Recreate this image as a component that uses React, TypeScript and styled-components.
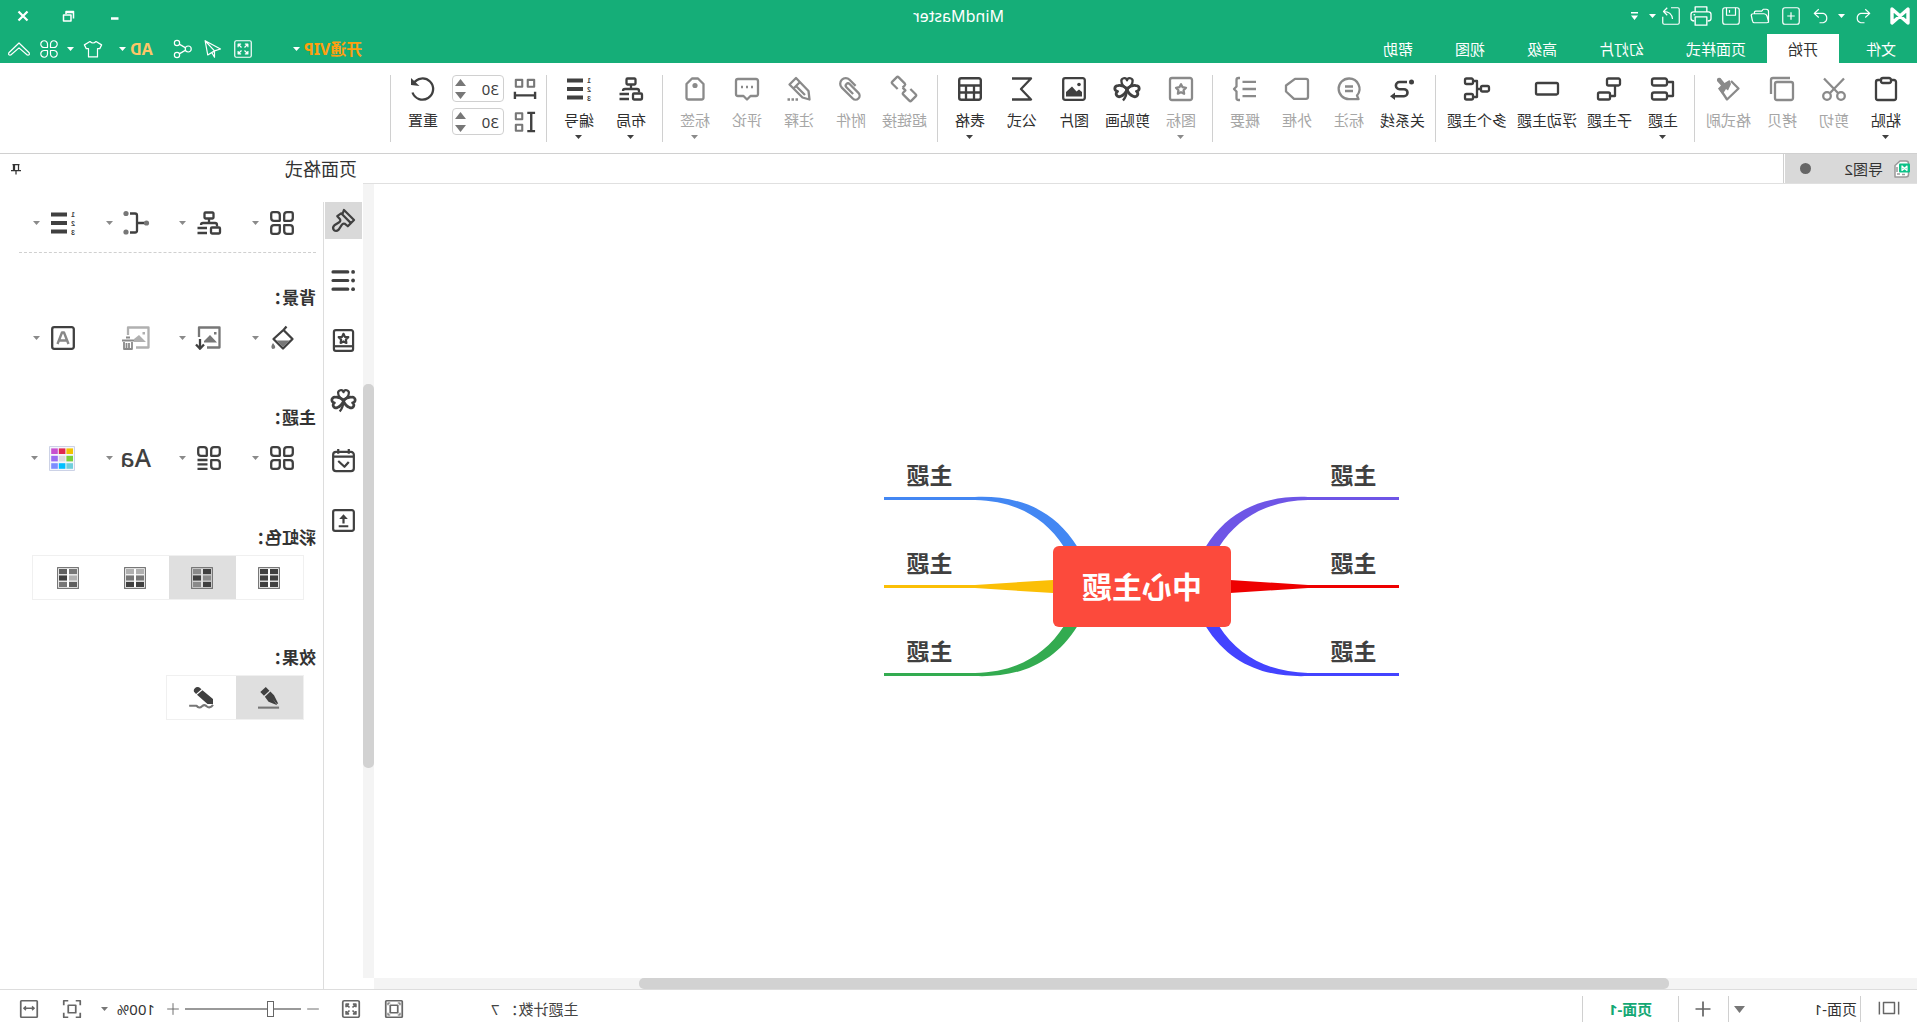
import React from "react";
import styled, { createGlobalStyle, css } from "styled-components";

const GREEN = "#15ae78";
const INK = "#404040";
const MUTED = "#8a8a8a";
const LINE = "#d0d0d0";

const GlobalStyle = createGlobalStyle`
  * { box-sizing: border-box; }
  html, body, #root { height: 100%; }
  body {
    margin: 0;
    background: #fff;
    color: #333;
    font-family: "Noto Sans", "Noto Sans CJK SC", sans-serif;
    font-size: 15px;
    line-height: 20px;
    overflow: hidden;
  }
  button, input, select { font: inherit; color: inherit; }
`;

/* The whole workspace is shown as a mirror image. */
const Window = styled.div`
  display: flex;
  flex-direction: column;
  height: 100vh;
  background: #fff;
  transform: scaleX(-1);
`;

const PlainButton = styled.button`
  display: flex;
  align-items: center;
  justify-content: center;
  flex: none;
  margin: 0;
  padding: 0;
  border: 0;
  background: none;
  white-space: nowrap;
`;

const Glyph = styled.svg<{ $thin?: boolean }>`
  display: block;
  flex: none;
  overflow: visible;
  fill: none;
  stroke: currentColor;
  stroke-width: ${(p) => (p.$thin ? 1.6 : 2.3)};
  stroke-linejoin: round;
`;

const Digit = styled.text`
  font-family: "Liberation Sans", sans-serif;
  font-size: 7px;
  font-weight: 700;
  fill: currentColor;
  stroke: none;
`;

const Letters = styled.text`
  font-family: "Noto Sans", sans-serif;
  font-size: 25px;
  font-weight: 500;
  fill: currentColor;
  stroke: none;
`;

type GlyphProps = { size?: number; thin?: boolean; children: React.ReactNode };
const Icon = ({ size = 24, thin, children }: GlyphProps) => (
  <Glyph width={size} height={size} viewBox="0 0 24 24" aria-hidden="true" $thin={thin}>
    {children}
  </Glyph>
);

const CaretSvg = styled.svg`
  display: block;
  flex: none;
  fill: currentColor;
`;
const Caret = ({ w = 7 }: { w?: number }) => (
  <CaretSvg width={w} height={Math.ceil(w / 2)} viewBox="0 0 8 4" preserveAspectRatio="none" aria-hidden="true">
    <path d="M0 0H8L4 4Z" />
  </CaretSvg>
);

const solid = { fill: "currentColor", stroke: "none" } as const;

const heart = "M12 12C8.6 9.4 7.6 7 7.6 5.2A2.3 2.3 0 0 1 12 3.8A2.3 2.3 0 0 1 16.4 5.2C16.4 7 15.4 9.4 12 12Z";
const clover = (
  <>
    <path d="M12 12C7.500 8.800 6.500 6.500 6.500 4.700A2.800 2.800 0 0 1 12 3.300A2.800 2.800 0 0 1 17.500 4.700C17.500 6.500 16.500 8.800 12 12Z" />
    <path d={heart} transform="rotate(104 12 12) translate(-3 -2.500) scale(1.250)" />
    <path d={heart} transform="rotate(-104 12 12) translate(-3 -2.500) scale(1.250)" />
    <path d="M12 12C12 17 13 20 16 23.500" />
  </>
);
const leafTL = "M1.200 3Q1.200 1.200 3 1.200H7Q9.800 1.200 9.800 4V9.800H4Q1.200 9.800 1.200 7Z";
const leafTR = "M14.200 4Q14.200 1.200 17 1.200H21Q22.800 1.200 22.800 3V7Q22.800 9.800 20 9.800H14.200Z";
const leafBL = "M4 14.200H9.800V20Q9.800 22.800 7 22.800H3Q1.200 22.800 1.200 21V17Q1.200 14.200 4 14.200Z";
const leafBR = "M14.200 14.200H20Q22.800 14.200 22.800 17V21Q22.800 22.800 21 22.800H17Q14.200 22.800 14.200 20Z";
const numbering = (
  <>
    <Digit x="0" y="6">1</Digit>
    <Digit x="0" y="15">2</Digit>
    <Digit x="0" y="24">3</Digit>
    <path d="M8 3.5H24M8 12H24M8 20.5H24" strokeWidth="3.8" />
  </>
);
const orgChart = (
  <>
    <rect x="7.5" y="1.5" width="9" height="6" rx="1" />
    <path d="M12 8V12M4 15.5V14Q4 12 6 12H18Q20 12 20 14" />
    <rect x="1" y="16.5" width="9" height="6" rx="1" />
    <path d="M14 17H23.5M14 22H23.5" />
  </>
);
const starPath = "M12 7.2L13.6 10.2L17 10.8L14.6 13.3L15.1 16.7L12 15.2L8.9 16.7L9.4 13.3L7 10.8L10.4 10.2Z";
const expandGlyph = (
  <>
    <rect x="1" y="1" width="22" height="22" rx="2" />
    <path d="M5.5 9.5V5.5H9.5M14.5 5.5H18.5V9.5M18.5 14.5V18.5H14.5M9.5 18.5H5.5V14.5M6 6L10 10M18 6L14 10M18 18L14 14M6 18L10 14" />
  </>
);

const icons: Record<string, React.ReactNode> = {
  paste: (<><rect x="2" y="3" width="20" height="20" rx="2" /><rect x="7" y="1" width="10" height="5" rx="2" fill="#fff" /></>),
  cut: (<><path d="M2 1.5L16 16M22 1.5L8 16" /><circle cx="5" cy="19" r="3.8" /><circle cx="19" cy="19" r="3.8" /></>),
  copy: (<><rect x="1" y="5" width="18" height="18" rx="2" /><path d="M4 1H21Q23 1 23 3V17" /></>),
  painter: (<><path d="M9 4L1.5 11.5L13 22.5L20.5 11" /><path {...solid} d="M10.500 3L15.500 6L19.500 1Q23.500 0 23 4L19 8.500L22 11.500L17.500 17.500L14 12L12 13.500L9 7Z" /></>),
  topic: (<><rect x="8" y="1.5" width="15" height="7" rx="2" /><rect x="8" y="15.5" width="15" height="7" rx="2" /><path d="M8 5H2V19H8" /></>),
  subtopic: (<><rect x="1" y="1.5" width="13" height="7" rx="1.5" /><rect x="11" y="15.5" width="12" height="7" rx="1.5" /><path d="M6 9V19H11" /></>),
  floating: <rect x="1" y="6" width="22" height="11.5" rx="1.5" />,
  multi: (<><rect x="0" y="9" width="8" height="5.5" rx="1.5" /><rect x="16" y="1.5" width="8" height="5.5" rx="1.5" /><rect x="16" y="17" width="8" height="5.5" rx="1.5" /><path d="M8 12H12M16 4H12V20H16" /></>),
  relation: (<><circle cx="2.5" cy="5" r="2.5" {...solid} /><path d="M7 5H14.5A3.6 3.6 0 0 1 14.5 12.2H10A3.5 3.5 0 0 0 10 19.2H19" strokeWidth="2.6" /><path {...solid} d="M19 15.5L24 19.2L19 23Z" /></>),
  callout: (<><path d="M12 1.5A10.3 10.3 0 1 1 12 22.2H2.5L4 18.5A10.3 10.3 0 0 1 12 1.5Z" /><path d="M8 9.5H16M8 14H16" /></>),
  boundary: <path d="M3 1.8H14L23 8.5V14.5L15 21.8H3Q1 21.8 1 20V3.6Q1 1.8 3 1.8Z" />,
  summary: (<><path d="M1 4.8H14.5M1 12H14.5M1 19.2H14.5" /><path d="M17 1H18.5Q20.5 1 20.5 3V9.5L23 12L20.5 14.5V21Q20.5 23 18.5 23H17" /></>),
  mark: (<><rect x="1" y="1" width="22" height="22" rx="2" /><path d={starPath} /></>),
  clipart: clover,
  picture: (<><rect x="1.2" y="1.2" width="21.6" height="21.6" rx="2" /><circle cx="7" cy="7.5" r="1.8" {...solid} /><path {...solid} d="M4 19.5V15L7 12.5L9.5 14.5L14 9.5L20 15V19.5Z" /></>),
  formula: <path d="M22 1.5H3L13 12L3 22.5H22" />,
  table: (<><rect x="1.2" y="1.2" width="21.6" height="21.6" rx="2" strokeWidth="2.4" /><path d="M1 8.5H23M1 15.5H23M8 8.5V23M16 8.5V23" /></>),
  link: (<g transform="rotate(-45 12 12)"><path d="M7.500 7.500H0Q-1.500 7.500 -1.500 9V15Q-1.500 16.500 0 16.500H8.500Q10 16.500 10 15V12H14" /><path d="M16.500 16.500H24Q25.500 16.500 25.500 15V9Q25.500 7.500 24 7.500H15.500Q14 7.500 14 9V12" /></g>),
  clip: (<g transform="rotate(45 12 12)"><path d="M6.500 13V4.500A5.500 5.500 0 0 1 17.500 4.500V20A4 4 0 0 1 9.500 20V7.500A2.200 2.200 0 0 1 14 7.500V17" /></g>),
  note: (<><path d="M15 1L21.500 7.500L8.500 20.500L1.500 22.500L2.500 14ZM11 5L17.500 11.500M15.500 8.500L6 18" /><path d="M13 22.5H23.5" strokeDasharray="2.5 1.5" /></>),
  comment: (<><path d="M3 2H21Q23 2 23 4V17Q23 19 21 19H15.5L12 22.5L8.5 19H3Q1 19 1 17V4Q1 2 3 2Z" /><path d="M6 10H8M11 10H13M16 10H18" /></>),
  tag: (<><path d="M9 1.5H15L20.5 7V20.5Q20.5 22.5 18.5 22.5H5.5Q3.5 22.5 3.5 20.5V7Z" /><circle cx="12" cy="8.5" r="2.6" {...solid} /></>),
  layout: orgChart,
  numbering,
  hspace: (<><rect x="2" y="2" width="7" height="7.5" stroke="#777" /><rect x="15" y="2" width="7" height="7.500" stroke="#777" /><path d="M1 15V23M23 15V23M1 19H23" strokeWidth="2.6" /></>),
  vspace: (<><rect x="15" y="2.5" width="7" height="6.5" stroke="#777" /><rect x="15" y="15" width="7" height="6.5" stroke="#777" /><path d="M1 2H9.5M1 22H9.5M5.2 2V22" strokeWidth="2.6" /></>),
  reset: (<><path d="M21.5 6.500A10.600 10.600 0 1 0 22.500 15.500" /><path {...solid} d="M15.500 9L24 8V1Z" /></>),
  leafGrid: (<><path d={leafTL} /><path d={leafTR} /><path d={leafBL} /><path d={leafBR} /></>),
  connector: (<><path d="M2 12H11M18 2.5H13Q11 2.5 11 4.5V19.5Q11 21.5 13 21.5H18" /><g fill="#777" stroke="none"><circle cx="1.5" cy="12" r="2.6" /><circle cx="22" cy="2.5" r="2.6" /><circle cx="22" cy="21" r="2.6" /></g></>),
  bucket: (<><path d="M9.5 3L20.5 13L11 22.5L1.5 13L10.5 4M7.5 .5L10.5 4" /><path fill="#777" stroke="none" d="M4.5 14.5H17.5L11 21ZM21 17Q24 21 21.5 23Q18 23 19 20Z" /></>),
  bgInsert: (<><path d="M14 21.5H1.5V1.5H22V11" stroke="#777" /><path fill="#777" stroke="none" d="M4 16.5L11 9L17 15V16.5ZM4.5 6H7V8.5H4.5Z" /><path d="M21 13V22.5M17 18.5L21 22.8L25 18.5" /></>),
  bgRemove: (<><path d="M12 21.5H-.5V1.5H20V9" stroke="#b0b0b0" /><path fill="#b0b0b0" stroke="none" d="M2 16L9 9L14 13V16ZM3 6H5.5V8.5H3Z" /><path d="M14 14.5H26M18 11.500H22" strokeWidth="2" /><path d="M16 16V23H24V16M19 17V22M21.500 17V22" strokeWidth="1.800" /></>),
  watermark: (<><rect x="1.2" y="1.2" width="21.6" height="21.6" rx="2" /><path d="M6.5 18L11 6.5H13L17.5 18M8 14.5H16" stroke="#888" strokeWidth="2.4" /></>),
  themeList: (<><path d={leafTL} /><path d={leafTR} /><path d={leafBL} /><path d="M13.5 14H23.5M13.5 18.400H23.5M13.5 22.8H23.5" /></>),
  fonts: <Letters x="-3" y="21">Aa</Letters>,
  brush: <path d="M11.500 1L1 11.500L7.500 18L10.500 15.500Q12.500 14.500 13.800 16.500L17 21.500Q19.500 24 22 22Q24 19.500 21.500 17L16.500 13.800Q14.500 12.500 15.800 10.500L18.500 7.500L14.500 4.500L13 5ZM14.500 4.500L4.500 14.500" />,
  outline: (<><path d="M7.5 3H23M7.5 12H23M7.5 21H23" strokeWidth="3.2" strokeLinecap="round" /><g {...solid}><circle cx="2" cy="3" r="2" /><circle cx="2" cy="12" r="2" /><circle cx="2" cy="21" r="2" /></g></>),
  stickers: (<><rect x="2" y="1.2" width="20" height="21.6" rx="2" /><path d="M2 18H22" /><path d="M12 5L13.5 8.2L17 8.5L14.5 11L15 14.5L12 13L9 14.5L9.5 11L7 8.5L10.5 8.2Z" /></>),
  task: (<><rect x="1.2" y="3" width="21.6" height="20" rx="3" /><path d="M6.5 0V5M17.5 0V5M1 8H23M6.500 13.500L11 18.500L17.500 12.500" /></>),
  upload: (<><rect x="1.2" y="1.2" width="21.6" height="21.6" rx="2" /><path d="M7 18H17M12 15V8" /><path {...solid} d="M7.5 10.5L12 5.5L16.5 10.5Z" /></>),
  pen: (<><path {...solid} d="M15.500 0L21.500 5.500L17.500 9.500L11.500 4ZM10.500 5L16.500 10.500L12.500 16L3 20L8 13L3.500 18.500L2 18L6.500 9Z" /><path d="M1 22.5H24" stroke="#777" /></>),
  scribble: (<><path {...solid} d="M13.500 1.5Q17 -1.5 20 1.5Q22 4 20 6L18.500 7.500L12.500 2.5ZM11.500 3.5L17.5 8.500L6 18.5H0V13Z" /><path d="M0 19.5Q3.5 24 7 21Q9 18.5 12 21Q15 24 18 20.5H26" stroke="#777" /></>),
  undo: <path d="M9 3L3 8.5L9 14M3 8.5H15A6.5 6.5 0 0 1 15 21H10" />,
  redo: <path d="M15 3L21 8.5L15 14M21 8.5H9A6.5 6.5 0 0 0 9 21H14" />,
  add: (<><rect x="1" y="1" width="22" height="22" rx="3" /><path d="M12 7V17M7 12H17" /></>),
  open: <path d="M2 21V6Q2 3 5 3H9L11 5.5H19Q21 5.5 21 9H8Q5 9 4 12L2 19Q2 21 4 21H21Q23 21 23.5 18L25 11Q25 9 22 9" />,
  save: (<><rect x="1" y="1" width="22" height="22" rx="3" /><path d="M6 1V11H18V1M14 4V7.5" /></>),
  print: (<><path d="M5 7V1H19V7M4 18Q0 18 0 15V10Q0 7 3 7H21Q24 7 24 10V15Q24 18 20 18" /><rect x="5" y="13" width="14" height="10" /><path d="M19 10.5H21" /></>),
  share: <path d="M12 1H3Q1 1 1 3V21Q1 23 3 23H21Q23 23 23 21V13M10 16Q11 6 22 6M17 1L22 6L17 11" />,
  full: expandGlyph,
  send: <path d="M22.5 1L2 12L10 14.5ZM22.5 1L19 20L10 14.5ZM10 14.5V23L13.5 17" />,
  nodes: (<><circle cx="5" cy="12" r="4" /><circle cx="20" cy="4" r="3.5" /><circle cx="20" cy="20" r="3.5" /><path d="M8.5 10.5L17 5.5M8.5 13.5L17 18.5" /></>),
  shirt: <path d="M8 2Q12 6 16 2L23.5 6.5L21 11.5H18V22.5H6V11.5H3L.5 6.5Z" />,
  command: <path d="M10 6A4.5 4.5 0 1 0 6 10H10ZM14 6A4.5 4.5 0 1 1 18 10H14ZM10 18A4.5 4.5 0 1 1 6 14H10ZM14 18A4.5 4.5 0 1 0 18 14H14Z" />,
  collapse: <path d="M-1.5 17L12 4L25.5 17Q27 20.5 23 20L12 10.5L1 20Q-3 20.5 -1.5 17Z" />,
  minimize: <path d="M5 17H20" strokeWidth="5" />,
  restore: (<><path d="M3 17V3H18V8M3 5H18" strokeWidth="3" /><rect x="8" y="10" width="15" height="12" strokeWidth="3" /></>),
  close: <path d="M3 3L21 21M21 3L3 21" strokeWidth="4.5" />,
  pin: (<><path d="M5 3H19M7 3V15M2 15H22M12 15V23" strokeWidth="2.5" /><path d="M16 3V15" strokeWidth="4.5" /></>),
  panes: (<><rect x="6" y="5" width="12" height="12" /><path d="M1.5 4V18M22.5 4V18" /></>),
  plus: <path d="M12 2V22M2 12H22" />,
  minus: <path d="M2 12H22" />,
  fit: (<><rect x="1" y="1" width="22" height="22" rx="1" /><rect x="7" y="7" width="10" height="10" /><path d="M4 7V4H7M17 4H20V7M20 17V20H17M7 20H4V17" strokeWidth="1.5" /></>),
  page: (<><path d="M1 7V1H7M17 1H23V7M23 17V23H17M7 23H1V17" /><rect x="7" y="7" width="10" height="10" /></>),
  fitWidth: (<><rect x="1" y="1" width="22" height="22" rx="1" /><path d="M5 11H19M8 8.5L5 11L8 13.5M16 8.5L19 11L16 13.5" strokeWidth="1.8" /></>),
};

/* ---------- header ---------- */

const Header = styled.header`
  flex: none;
  color: #fff;
  background: ${GREEN};
`;
const TitleRow = styled.div`
  display: grid;
  grid-template-columns: 1fr auto 1fr;
  align-items: center;
  height: 32px;
`;
const QuickBar = styled.div`
  display: flex;
  align-items: center;
  padding-left: 7px;
`;
const Logo = styled.svg`
  display: block;
  width: 20px;
  height: 18px;
  margin-right: 12px;
`;
const QuickButton = styled(PlainButton)`
  width: 30px;
  height: 24px;
`;
const CaretButton = styled(PlainButton)<{ $w?: number }>`
  width: ${(p) => p.$w ?? 14}px;
  height: 24px;
`;
const AppTitle = styled.h1`
  margin: 0;
  font-size: 16px;
  line-height: 20px;
  font-weight: 400;
`;
const WindowButtons = styled.div`
  display: flex;
  justify-content: flex-end;
`;
const WindowButton = styled(PlainButton)`
  width: 46px;
  height: 28px;
`;
const MenuRow = styled.div`
  display: flex;
  align-items: flex-end;
  height: 31px;
`;
const Menu = styled.nav`
  display: flex;
`;
const MenuTab = styled(PlainButton)<{ $active?: boolean; $first?: boolean }>`
  height: 29px;
  padding: 0 21px;
  margin-right: ${(p) => (p.$first ? 6 : 0)}px;
  ${(p) =>
    p.$active &&
    css`
      color: #333;
      background: #fff;
    `}
`;
const HeaderTools = styled.div`
  display: flex;
  align-items: center;
  height: 29px;
  margin-left: auto;
  padding-right: 4px;
`;
const AccentButton = styled(PlainButton)<{ $color: string }>`
  color: ${(p) => p.$color};
  font-size: 16px;
  font-weight: 700;
`;
const ToolCluster = styled.div`
  display: flex;
  align-items: center;
  margin: 0 15px 0 32px;
`;
const EndCluster = styled.div`
  display: flex;
  align-items: center;
  margin-left: 8px;
`;

/* ---------- ribbon ---------- */

const Ribbon = styled.div`
  display: flex;
  flex: none;
  height: 91px;
  padding-top: 12px;
  border-bottom: 1px solid ${LINE};
`;
const RibbonGroup = styled.div`
  display: flex;
  height: 67px;
  padding: 0 6px 0 5px;
  border-right: 1px solid ${LINE};
`;
const RibbonButton = styled(PlainButton)<{ $muted?: boolean }>`
  flex-direction: column;
  justify-content: flex-start;
  min-width: 52px;
  height: 67px;
  padding: 2px 5px 0;
  color: ${(p) => (p.$muted ? MUTED : INK)};
`;
const RibbonLabel = styled.span<{ $muted?: boolean }>`
  margin: 9px 0 5px;
  color: ${(p) => (p.$muted ? "#a6a6a6" : "#2f2f2f")};
`;
const Spacing = styled.div`
  display: flex;
  flex-direction: column;
  gap: 6px;
  padding-right: 3px;
`;
const SpacingField = styled.label`
  display: flex;
  align-items: center;
  gap: 10px;
  height: 27px;
  padding-left: 5px;
  color: ${INK};
`;
const SpinBox = styled.span`
  display: flex;
  align-items: center;
  width: 52px;
  height: 27px;
  padding: 0 2px 0 4px;
  border: 1px solid ${LINE};
  border-radius: 4px;
`;
const SpinInput = styled.input`
  flex: 1;
  min-width: 0;
  padding: 0;
  border: 0;
  outline: 0;
  background: none;
`;
const Arrows = styled.span`
  display: flex;
  flex-direction: column;
  gap: 6px;
  color: #777;
`;
const ArrowSvg = styled(CaretSvg)<{ $up?: boolean }>`
  transform: rotate(${(p) => (p.$up ? 180 : 0)}deg);
`;

/* ---------- work area ---------- */

const Main = styled.main`
  display: flex;
  flex: 1;
  min-height: 0;
`;
const Editor = styled.section`
  display: flex;
  flex: 1;
  flex-direction: column;
  min-width: 0;
`;
const DocTabs = styled.div`
  display: flex;
  flex: none;
  height: 30px;
  border-bottom: 1px solid #e0e0e0;
`;
const DocTab = styled(PlainButton)`
  width: 132px;
  height: 29px;
  padding-left: 7px;
  gap: 10px;
  justify-content: flex-start;
  background: #d9d9d9;
  color: #333;
`;
const Dot = styled.span`
  width: 11px;
  height: 11px;
  margin: 0 15px 0 auto;
  border-radius: 50%;
  background: #666;
`;
const TabEdge = styled.span`
  width: 1px;
  margin-left: 1px;
  background: ${LINE};
`;
const Stage = styled.div`
  display: flex;
  flex: 1;
  min-height: 0;
`;
const CanvasColumn = styled.div`
  display: flex;
  flex: 1;
  flex-direction: column;
  min-width: 0;
`;
const Canvas = styled.div`
  display: flex;
  flex: 1;
  align-items: center;
  justify-content: center;
  min-height: 0;
  padding: 11px 0 0 8px;
`;
const Board = styled.div`
  position: relative;
  width: 515px;
  height: 261px;
`;
const Branches = styled.svg`
  position: absolute;
  inset: 0;
  overflow: visible;
`;
const RootNode = styled.div`
  position: absolute;
  left: 168px;
  top: 90px;
  width: 178px;
  height: 81px;
  border-radius: 6px;
  background: #fc4a3c;
  color: #fff;
  font-size: 30px;
  line-height: 82px;
  font-weight: 700;
  text-align: center;
`;
const TopicNode = styled.div<{ $x: number; $y: number; $color: string }>`
  position: absolute;
  left: ${(p) => p.$x}px;
  top: ${(p) => p.$y}px;
  width: 91px;
  height: 44px;
  border-bottom: 3px solid ${(p) => p.$color};
  color: ${INK};
  font-size: 23px;
  line-height: 38px;
  font-weight: 700;
  text-align: center;
`;
const HScroll = styled.div`
  display: flex;
  flex: none;
  height: 11px;
  background: #f4f4f4;
`;
const VScroll = styled.div`
  display: flex;
  flex-direction: column;
  flex: none;
  width: 11px;
  margin-bottom: 11px;
  background: #f4f4f4;
`;
const ScrollPart = styled.div<{ $grow: number; $thumb?: boolean }>`
  flex: ${(p) => p.$grow} 1 0;
  border-radius: 5px;
  background: ${(p) => (p.$thumb ? "#d2d2d2" : "transparent")};
`;

/* ---------- side panel ---------- */

const Panel = styled.aside`
  display: flex;
  flex: none;
  flex-direction: column;
  width: 363px;
`;
const PanelHead = styled.div`
  display: flex;
  align-items: center;
  justify-content: space-between;
  height: 30px;
  padding: 0 10px 0 6px;
`;
const PanelTitle = styled.h2`
  margin: 0;
  font-size: 18px;
  line-height: 24px;
  font-weight: 400;
`;
const PanelBody = styled.div`
  display: flex;
  flex: 1;
  min-height: 0;
  margin-top: 18px;
`;
const Rail = styled.nav`
  display: flex;
  flex: none;
  flex-direction: column;
  gap: 23px;
  width: 40px;
  padding-left: 1px;
  border-right: 1px solid #ddd;
`;
const RailButton = styled(PlainButton)<{ $active?: boolean }>`
  width: 37px;
  height: 37px;
  color: ${INK};
  background: ${(p) => (p.$active ? "#d9d9d9" : "none")};
`;
const Settings = styled.div`
  flex: 1;
  min-width: 0;
  padding: 7px 19px 0 7px;
`;
const ToolRow = styled.div`
  display: flex;
  height: 28px;
  padding-left: 20px;
`;
const Tool = styled(PlainButton)<{ $muted?: boolean }>`
  justify-content: flex-start;
  width: 73px;
  height: 28px;
  padding-left: 2px;
  gap: 11px;
  color: ${(p) => (p.$muted ? MUTED : INK)};
  &:last-child {
    width: 56px;
  }
`;
const GreyCaret = styled.span`
  color: #8a8a8a;
`;
const Divider = styled.hr`
  margin: 15px 0 33px;
  border: 0;
  border-top: 1px dashed ${LINE};
`;
const Section = styled.section`
  height: 120px;
`;
const SectionTitle = styled.h3<{ $gap: number }>`
  margin: 0 0 ${(p) => p.$gap}px;
  font-size: 17px;
  line-height: 24px;
  font-weight: 700;
`;
const Segments = styled.div`
  display: inline-flex;
  height: 45px;
  margin-left: 12px;
  padding-right: 2px;
  border: 1px solid #f0f0f0;
`;
const Segment = styled(PlainButton)<{ $active?: boolean }>`
  width: 67px;
  height: 43px;
  color: ${INK};
  background: ${(p) => (p.$active ? "#dfdfdf" : "none")};
`;

const Swatches = () => {
  const colors = ["#f2c200", "#e02850", "#c750cf", "#7ad03a", "#dcdcdc", "#9b6cf0", "#70cfdc", "#00bfff", "#7c8cff"];
  return (
    <Glyph width="26" height="25" viewBox="0 0 26 25" aria-hidden="true">
      <rect x=".5" y=".5" width="25" height="24" fill="#f4f6fc" stroke="#ccd2e6" strokeWidth="1" />
      {colors.map((c, i) => (
        <rect key={c} x={2 + (i % 3) * 7.6} y={2.4 + Math.floor(i / 3) * 7.4} width="6.600" height="5.600" fill={c} stroke="none" />
      ))}
    </Glyph>
  );
};

const Rainbow = ({ shades }: { shades: string[] }) => (
  <Glyph width="22" height="22" viewBox="0 0 22 22" aria-hidden="true">
    <rect x=".6" y=".6" width="20.8" height="20.8" fill="none" stroke="#777" strokeWidth="1.2" />
    {shades.map((c, i) => (
      <rect key={i} x={i % 2 ? 12 : 2} y={2 + Math.floor(i / 2) * 6.4} width="8" height="5.2" fill={c} stroke="none" />
    ))}
  </Glyph>
);

/* ---------- status bar ---------- */

const StatusBar = styled.footer`
  display: flex;
  flex: none;
  align-items: center;
  height: 37px;
  padding: 2px 17px 0 0;
  border-top: 1px solid #ddd;
  color: #444;
`;
const StatusButton = styled(PlainButton)<{ $w?: number }>`
  width: ${(p) => p.$w ?? 24}px;
  height: 30px;
  color: #666;
`;
const Rule = styled.span`
  width: 1px;
  height: 26px;
  background: ${LINE};
`;
const PageSelect = styled.label`
  display: flex;
  align-items: center;
  width: 131px;
  padding: 0 5px 0 3px;
  color: #777;
`;
const BareSelect = styled.select`
  flex: 1;
  min-width: 0;
  padding: 0;
  border: 0;
  outline: 0;
  appearance: none;
  background: none;
  color: #333;
`;
const PageTab = styled(PlainButton)`
  width: 95px;
  height: 30px;
  color: #14a874;
  font-weight: 700;
`;
const Count = styled.span`
  display: flex;
  gap: 4px;
  margin: 0 85px 0 auto;
`;
const IconPair = styled.div`
  display: flex;
  gap: 19px;
`;
const Zoom = styled.div`
  display: flex;
  align-items: center;
  margin: 0 17px 0 14px;
`;
const ZoomLevel = styled.label`
  display: flex;
  align-items: center;
  width: 54px;
  margin-left: 6px;
  color: #777;
`;
const Slider = styled.input`
  width: 116px;
  height: 16px;
  margin: 0;
  appearance: none;
  background: linear-gradient(#999, #999) center / 100% 2px no-repeat;
  &::-webkit-slider-thumb {
    appearance: none;
    width: 7px;
    height: 16px;
    border: 1px solid #666;
    background: #fff;
  }
`;

/* ---------- data ---------- */

type Action = { label: string; icon: string; muted?: boolean; menu?: boolean };
const groups: Action[][] = [
  [
    { label: "粘贴", icon: "paste", menu: true },
    { label: "剪切", icon: "cut", muted: true },
    { label: "拷贝", icon: "copy", muted: true },
    { label: "格式刷", icon: "painter", muted: true },
  ],
  [
    { label: "主题", icon: "topic", menu: true },
    { label: "子主题", icon: "subtopic" },
    { label: "浮动主题", icon: "floating" },
    { label: "多个主题", icon: "multi" },
  ],
  [
    { label: "关系线", icon: "relation" },
    { label: "标注", icon: "callout", muted: true },
    { label: "外框", icon: "boundary", muted: true },
    { label: "概要", icon: "summary", muted: true },
  ],
  [
    { label: "图标", icon: "mark", muted: true, menu: true },
    { label: "剪贴画", icon: "clipart" },
    { label: "图片", icon: "picture" },
    { label: "公式", icon: "formula" },
    { label: "表格", icon: "table", menu: true },
  ],
  [
    { label: "超链接", icon: "link", muted: true },
    { label: "附件", icon: "clip", muted: true },
    { label: "注释", icon: "note", muted: true },
    { label: "评论", icon: "comment", muted: true },
    { label: "标签", icon: "tag", muted: true, menu: true },
  ],
  [
    { label: "布局", icon: "layout", menu: true },
    { label: "编号", icon: "numbering", menu: true },
  ],
];

const topics = [
  { x: 0, y: 0, color: "#6e55e6" },
  { x: 0, y: 88, color: "#ee0000" },
  { x: 0, y: 176, color: "#4343ff" },
  { x: 424, y: 0, color: "#4387f3" },
  { x: 424, y: 88, color: "#fbbf06" },
  { x: 424, y: 176, color: "#33ab50" },
];

const curve = "M91 41C130 39.5 168 50 193.500 91H180C160 60 130 45 91 44Z";
const wedge = "M91 129L169 124V137L91 132Z";

const RibbonAction = ({ a }: { a: Action }) => (
  <RibbonButton type="button" $muted={a.muted}>
    <Icon>{icons[a.icon]}</Icon>
    <RibbonLabel $muted={a.muted}>{a.label}</RibbonLabel>
    {a.menu && <Caret />}
  </RibbonButton>
);

const Quick = ({ icon, label, size = 18 }: { icon: string; label: string; size?: number }) => (
  <QuickButton type="button" aria-label={label}>
    <Icon size={size} thin>{icons[icon]}</Icon>
  </QuickButton>
);

const PanelTool = ({ icon, label, muted, menu = true }: { icon: string; label: string; muted?: boolean; menu?: boolean }) => (
  <Tool type="button" aria-label={label} $muted={muted}>
    {icon === "swatches" ? <Swatches /> : <Icon>{icons[icon]}</Icon>}
    {menu && <GreyCaret><Caret /></GreyCaret>}
  </Tool>
);

const Arrow = ({ up }: { up?: boolean }) => (
  <ArrowSvg $up={up} width="11" height="7" viewBox="0 0 11 7" aria-hidden="true">
    <path d="M0 0H11L5.500 7Z" />
  </ArrowSvg>
);

const SpaceInput = ({ icon, label }: { icon: string; label: string }) => (
  <SpacingField>
    <Icon size={22}>{icons[icon]}</Icon>
    <SpinBox>
      <SpinInput type="text" defaultValue="30" aria-label={label} />
      <Arrows>
        <PlainButton type="button" aria-label={`${label}+`}><Arrow up /></PlainButton>
        <PlainButton type="button" aria-label={`${label}-`}><Arrow /></PlainButton>
      </Arrows>
    </SpinBox>
  </SpacingField>
);

export default function App() {
  return (
    <>
      <GlobalStyle />
      <Window>
        <Header>
          <TitleRow>
            <QuickBar>
              <Logo viewBox="0 0 20 18" aria-hidden="true">
                <path d="M2 2V16L10 9L18 16V2L10 9Z" fill="none" stroke="#fff" strokeWidth="3.400" strokeLinejoin="round" />
              </Logo>
              <Quick icon="undo" label="撤销" />
              <CaretButton type="button" aria-label="撤销列表" $w={12}><Caret /></CaretButton>
              <Quick icon="redo" label="重做" />
              <Quick icon="add" label="新建" />
              <Quick icon="open" label="打开" />
              <Quick icon="save" label="保存" />
              <Quick icon="print" label="打印" size={20} />
              <Quick icon="share" label="导出" />
              <CaretButton type="button" aria-label="导出列表" $w={7}><Caret /></CaretButton>
              <CaretButton type="button" aria-label="自定义" $w={28}>
                <CaretSvg width="7" height="8" viewBox="0 0 7 8" aria-hidden="true"><path d="M0 0H7V1.5H0ZM0 3.5H7L3.5 8Z" /></CaretSvg>
              </CaretButton>
            </QuickBar>
            <AppTitle>MindMaster</AppTitle>
            <WindowButtons>
              <WindowButton type="button" aria-label="最小化"><Icon size={12}>{icons.minimize}</Icon></WindowButton>
              <WindowButton type="button" aria-label="还原"><Icon size={12}>{icons.restore}</Icon></WindowButton>
              <WindowButton type="button" aria-label="关闭"><Icon size={12}>{icons.close}</Icon></WindowButton>
            </WindowButtons>
          </TitleRow>
          <MenuRow>
            <Menu>
              {["文件", "开始", "页面样式", "幻灯片", "高级", "视图", "帮助"].map((t, i) => (
                <MenuTab key={t} type="button" $first={i === 0} $active={i === 1}>{t}</MenuTab>
              ))}
            </Menu>
            <HeaderTools>
              <AccentButton type="button" $color="#ff9f0f">开通VIP</AccentButton>
              <CaretButton type="button" aria-label="VIP"><Caret /></CaretButton>
              <ToolCluster>
                <Quick icon="full" label="全屏" />
                <Quick icon="send" label="发送" />
                <Quick icon="nodes" label="分享" />
              </ToolCluster>
              <AccentButton type="button" $color="#fdc668">AD</AccentButton>
              <CaretButton type="button" aria-label="AD列表"><Caret /></CaretButton>
              <EndCluster>
                <Quick icon="shirt" label="皮肤" />
                <CaretButton type="button" aria-label="皮肤列表"><Caret /></CaretButton>
                <Quick icon="command" label="应用" />
                <Quick icon="collapse" label="收起" />
              </EndCluster>
            </HeaderTools>
          </MenuRow>
        </Header>

        <Ribbon>
          {groups.map((g, i) => (
            <RibbonGroup key={i}>
              {g.map((a) => <RibbonAction key={a.label} a={a} />)}
            </RibbonGroup>
          ))}
          <RibbonGroup>
            <Spacing>
              <SpaceInput icon="hspace" label="水平间距" />
              <SpaceInput icon="vspace" label="垂直间距" />
            </Spacing>
            <RibbonAction a={{ label: "重置", icon: "reset" }} />
          </RibbonGroup>
        </Ribbon>

        <Main>
          <Editor>
            <DocTabs>
              <DocTab type="button">
                <Glyph width="17" height="18" viewBox="0 0 17 18" aria-hidden="true">
                  <path d="M4 1H10L15 5.5V17H4Q1.5 17 1.5 14.5V3.5Q1.5 1 4 1Z" fill="#fff" stroke="#999" strokeWidth="1.5" />
                  <rect x="0" y="3.5" width="11" height="9" rx="1" fill="#0cc288" stroke="none" />
                  <path d="M3 10.5V6L5.5 8.5L8 6V10.5L5.5 8.5Z" stroke="#fff" strokeWidth="1.200" />
                  <path d="M10 14H13M5 14.5H8M13 7V12" stroke="#999" strokeWidth="1.5" />
                </Glyph>
                导图2
                <Dot />
              </DocTab>
              <TabEdge />
            </DocTabs>
            <Stage>
              <CanvasColumn>
                <Canvas>
                  <Board>
                    <Branches width="515" height="261" viewBox="0 0 515 261" aria-hidden="true">
                      <path d={curve} fill={topics[0].color} />
                      <path d={wedge} fill={topics[1].color} />
                      <path d={curve} fill={topics[2].color} transform="translate(0 261) scale(1 -1)" />
                      <g transform="translate(515 0) scale(-1 1)">
                        <path d={curve} fill={topics[3].color} />
                        <path d={wedge} fill={topics[4].color} />
                        <path d={curve} fill={topics[5].color} transform="translate(0 261) scale(1 -1)" />
                      </g>
                    </Branches>
                    {topics.map((t) => (
                      <TopicNode key={t.color} $x={t.x} $y={t.y} $color={t.color}>主题</TopicNode>
                    ))}
                    <RootNode>中心主题</RootNode>
                  </Board>
                </Canvas>
                <HScroll>
                  <ScrollPart $grow={248} />
                  <ScrollPart $grow={1030} $thumb />
                  <ScrollPart $grow={265} />
                </HScroll>
              </CanvasColumn>
              <VScroll>
                <ScrollPart $grow={200} />
                <ScrollPart $grow={384} $thumb />
                <ScrollPart $grow={210} />
              </VScroll>
            </Stage>
          </Editor>

          <Panel>
            <PanelHead>
              <PanelTitle>页面格式</PanelTitle>
              <PlainButton type="button" aria-label="固定"><Icon size={12}>{icons.pin}</Icon></PlainButton>
            </PanelHead>
            <PanelBody>
              <Rail>
                {[["brush", "格式"], ["outline", "大纲"], ["stickers", "图标"], ["clipart", "剪贴画"], ["task", "任务"], ["upload", "导入"]].map(([icon, label], i) => (
                  <RailButton key={icon} type="button" aria-label={label} $active={i === 0}>
                    <Icon size={23}>{icons[icon]}</Icon>
                  </RailButton>
                ))}
              </Rail>
              <Settings>
                <ToolRow>
                  <PanelTool icon="leafGrid" label="样式" />
                  <PanelTool icon="layout" label="布局" />
                  <PanelTool icon="connector" label="连接线" />
                  <PanelTool icon="numbering" label="编号" />
                </ToolRow>
                <Divider />
                <Section>
                  <SectionTitle $gap={14}>背景：</SectionTitle>
                  <ToolRow>
                    <PanelTool icon="bucket" label="填充" />
                    <PanelTool icon="bgInsert" label="背景图" />
                    <PanelTool icon="bgRemove" label="移除背景图" muted menu={false} />
                    <PanelTool icon="watermark" label="水印" />
                  </ToolRow>
                </Section>
                <Section>
                  <SectionTitle $gap={14}>主题：</SectionTitle>
                  <ToolRow>
                    <PanelTool icon="leafGrid" label="主题样式" />
                    <PanelTool icon="themeList" label="主题列表" />
                    <PanelTool icon="fonts" label="字体" />
                    <PanelTool icon="swatches" label="颜色" />
                  </ToolRow>
                </Section>
                <Section>
                  <SectionTitle $gap={5}>彩虹色：</SectionTitle>
                  <Segments>
                    <Segment type="button" aria-label="彩虹色一"><Rainbow shades={["#404040", "#404040", "#404040", "#404040", "#404040", "#404040"]} /></Segment>
                    <Segment type="button" aria-label="彩虹色二" $active><Rainbow shades={["#404040", "#8a8a8a", "#8a8a8a", "#404040", "#404040", "#8a8a8a"]} /></Segment>
                    <Segment type="button" aria-label="彩虹色三"><Rainbow shades={["#b0b0b0", "#b0b0b0", "#777", "#777", "#404040", "#404040"]} /></Segment>
                    <Segment type="button" aria-label="彩虹色四"><Rainbow shades={["#777", "#606060", "#b0b0b0", "#404040", "#606060", "#777"]} /></Segment>
                  </Segments>
                </Section>
                <Section>
                  <SectionTitle $gap={5}>效果：</SectionTitle>
                  <Segments>
                    <Segment type="button" aria-label="钢笔" $active><Icon size={22}>{icons.pen}</Icon></Segment>
                    <Segment type="button" aria-label="手绘"><Icon size={22}>{icons.scribble}</Icon></Segment>
                  </Segments>
                </Section>
              </Settings>
            </PanelBody>
          </Panel>
        </Main>

        <StatusBar>
          <StatusButton type="button" aria-label="页面视图" $w={56}><Icon size={22} thin>{icons.panes}</Icon></StatusButton>
          <Rule />
          <PageSelect>
            <BareSelect aria-label="页面"><option>页面-1</option></BareSelect>
            <ArrowSvg width="11" height="7" viewBox="0 0 11 7" aria-hidden="true"><path d="M0 0H11L5.5 7Z" /></ArrowSvg>
          </PageSelect>
          <Rule />
          <StatusButton type="button" aria-label="新增页面" $w={49}><Icon size={18}>{icons.plus}</Icon></StatusButton>
          <Rule />
          <PageTab type="button">页面-1</PageTab>
          <Rule />
          <Count><span>主题计数：</span><span>7</span></Count>
          <IconPair>
            <StatusButton type="button" aria-label="适应"><Icon size={18}>{icons.fit}</Icon></StatusButton>
            <StatusButton type="button" aria-label="全屏"><Icon size={18}>{icons.full}</Icon></StatusButton>
          </IconPair>
          <Zoom>
            <StatusButton type="button" aria-label="缩小"><Icon size={14} thin>{icons.minus}</Icon></StatusButton>
            <Slider type="range" aria-label="缩放" min={0} max={400} defaultValue={100} />
            <StatusButton type="button" aria-label="放大"><Icon size={14} thin>{icons.plus}</Icon></StatusButton>
            <ZoomLevel>
              <BareSelect aria-label="缩放比例"><option>100%</option></BareSelect>
              <Caret />
            </ZoomLevel>
          </Zoom>
          <IconPair>
            <StatusButton type="button" aria-label="适应页面"><Icon size={18}>{icons.page}</Icon></StatusButton>
            <StatusButton type="button" aria-label="适应宽度"><Icon size={18}>{icons.fitWidth}</Icon></StatusButton>
          </IconPair>
        </StatusBar>
      </Window>
    </>
  );
}
